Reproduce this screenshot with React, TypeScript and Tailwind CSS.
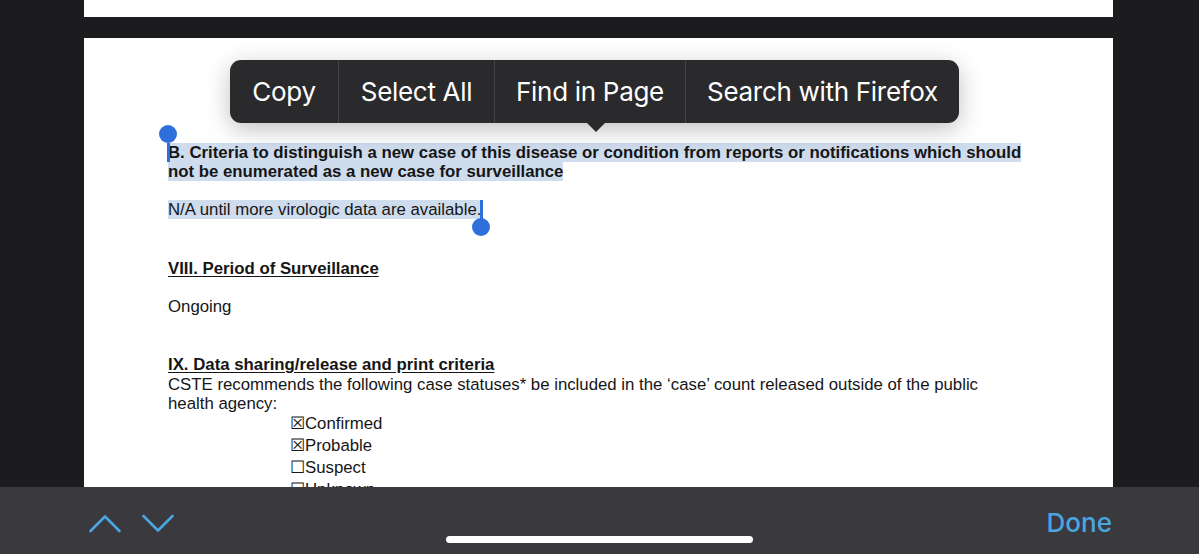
const doc = "font-['Liberation_Sans',Arial,sans-serif] text-[#161616]";
const sel = "bg-[#cfdcee]";

function Handle({ top }: { top: boolean }) {
  // selection grabber: dot above the start, below the end
  return (
    <span className="relative inline-block w-0 align-baseline">
      <span className="absolute left-[-1.5px] top-[-15px] h-[19px] w-[3px] bg-[#2f6fdc]" />
      <span
        className={`absolute left-[-9px] h-[18px] w-[18px] rounded-full bg-[#2f6fdc] ${
          top ? "top-[-33px]" : "top-[3px]"
        }`}
      />
    </span>
  );
}

function Menu() {
  const items = [
    { label: "Copy", w: "w-[108px]" },
    { label: "Select All", w: "w-[156px]" },
    { label: "Find in Page", w: "w-[191px]" },
    { label: "Search with Firefox", w: "w-[274px]" },
  ];
  return (
    <div className="absolute left-[146px] top-[22px] z-10">
      <div className="flex h-[63px] rounded-[11px] bg-[#2a2a2c] shadow-[0_6px_24px_rgba(0,0,0,0.25)]">
        {items.map((it, i) => (
          <div
            key={it.label}
            className={`${it.w} flex items-center justify-center font-['Inter',sans-serif] text-[26px] tracking-[-0.3px] text-white ${
              i > 0 ? "border-l border-[#444447]" : ""
            }`}
          >
            {it.label}
          </div>
        ))}
      </div>
      <div className="absolute left-[357px] top-[63px] h-0 w-0 border-x-[9px] border-t-[9px] border-x-transparent border-t-[#2a2a2c]" />
    </div>
  );
}

function Chevron({ up }: { up: boolean }) {
  return (
    <svg width="32" height="19" viewBox="0 0 32 19" fill="none">
      <polyline
        points={up ? "1.5,17 16,2.5 30.5,17" : "1.5,2 16,16.5 30.5,2"}
        stroke="#4aa6e0"
        strokeWidth="2.6"
        strokeLinecap="round"
        strokeLinejoin="round"
      />
    </svg>
  );
}

export default function App() {
  return (
    <div className="flex h-[554px] w-[1199px] flex-col overflow-hidden bg-[#1c1c1e]">
      <div className="relative h-[487px] overflow-hidden">
        <div className="ml-[84px] h-[17px] w-[1029px] bg-white" />
        <div className="relative ml-[84px] mt-[21px] h-[460px] w-[1029px] bg-white pl-[84px] pt-[105px]">
          <Menu />
          <div className={`${doc} text-[16.8px] font-bold leading-[19px]`}>
            <div>
              <span className={sel}>
                <Handle top />
                B. Criteria to distinguish a new case of this disease or condition from reports or notifications which should
              </span>
            </div>
            <div>
              <span className={sel}>not be enumerated as a new case for surveillance</span>
            </div>
          </div>
          <div className={`${doc} mt-[19px] text-[16.8px] leading-[19px]`}>
            <span className={sel}>N/A until more virologic data are available.</span>
            <Handle top={false} />
          </div>
          <div className={`${doc} mt-[40px] text-[16.8px] font-bold leading-[19px] underline underline-offset-[2px]`}>
            VIII. Period of Surveillance
          </div>
          <div className={`${doc} mt-[19px] text-[16.8px] leading-[19px]`}>Ongoing</div>
          <div className={`${doc} mt-[39px] text-[16.8px] font-bold leading-[19px] underline underline-offset-[2px]`}>
            IX. Data sharing/release and print criteria
          </div>
          <div className={`${doc} mt-[1px] w-[830px] text-[16.8px] leading-[19px]`}>
            CSTE recommends the following case statuses* be included in the ‘case’ count released outside of the public health agency:
          </div>
          <div className={`${doc} ml-[122px] text-[16.8px] leading-[22px]`}>
            <div>☒Confirmed</div>
            <div>☒Probable</div>
            <div>☐Suspect</div>
            <div>☐Unknown</div>
          </div>
        </div>
      </div>
      <div className="relative flex h-[67px] items-start bg-[#3a393e] pl-[89px] pr-[87px] pt-[27px]">
        <div className="flex gap-[21px]">
          <Chevron up />
          <Chevron up={false} />
        </div>
        <div className="ml-auto mt-[-6px] font-['Inter',sans-serif] text-[26px] font-medium leading-[30px] text-[#4aa6e0]">
          Done
        </div>
        <div className="absolute bottom-[11px] left-[446px] h-[7px] w-[307px] rounded-full bg-white" />
      </div>
    </div>
  );
}
